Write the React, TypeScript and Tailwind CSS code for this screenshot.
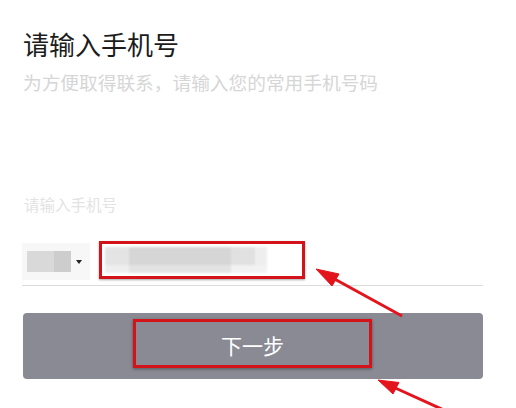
import React from "react";

export default function App() {
  return (
    <div
      className="relative w-[516px] h-[408px] bg-white overflow-hidden"
      style={{ fontFamily: '"Noto Sans CJK SC", "Noto Sans", sans-serif' }}
    >
      <div className="flex flex-col pl-[23px] pr-[33px]">
        <div className="mt-[31px] text-[26px] leading-[26px] text-[#1c1c1c]">请输入手机号</div>
        <div className="mt-[15px] text-[18.7px] leading-[19px] text-[#d6d6d6]">
          为方便取得联系，请输入您的常用手机号码
        </div>
        <div className="mt-[105px] ml-[1px] text-[15.5px] leading-[16px] text-[#e3e3e3]">请输入手机号</div>
        <div className="mt-[28px] flex h-[46px] items-start border-b border-[#dcdcdc] -ml-[1px]">
          <div className="mt-[3px] flex h-[37px] w-[68px] items-center bg-[#f7f7f7] pl-[5px]">
            <div className="flex h-[21px] blur-[0.6px]">
              <div className="w-[27px] bg-[#d9d9d9]" />
              <div className="w-[17px] bg-[#cdcdcd]" />
            </div>
            <div className="ml-[5px] h-0 w-0 border-x-[3px] border-t-[4px] border-x-transparent border-t-[#222]" />
          </div>
          <div className="ml-[9px] mt-[1px] flex h-[38px] w-[206px] items-center border-[3px] border-[#d3121a] pl-[3px] shadow-[0_1px_2px_rgba(0,0,0,0.35)]">
            <div className="flex h-[26px] w-[162px] flex-col blur-[1px]">
              <div className="flex h-[18px]">
                <div className="w-[24px] bg-[#e4e4e4]" />
                <div className="w-[102px] bg-[#d6d6d6]" />
                <div className="w-[24px] bg-[#e1e1e1]" />
                <div className="w-[12px] bg-[#eeeeee]" />
              </div>
              <div className="flex h-[8px]">
                <div className="w-[24px] bg-[#eeeeee]" />
                <div className="w-[102px] bg-[#e3e3e3]" />
                <div className="w-[36px] bg-[#f2f2f2]" />
              </div>
            </div>
          </div>
        </div>
        <div className="mt-[27px] flex h-[66px] w-[460px] items-start rounded-[4px] bg-[#8a8a94] pl-[110px] pt-[6px]">
          <div className="flex h-[49px] w-[239px] items-center justify-center border-[3px] border-[#d3121a] shadow-[0_1px_3px_rgba(0,0,0,0.4)]">
            <span className="mt-[3px] text-[21px] leading-[21px] text-white">下一步</span>
          </div>
        </div>
      </div>
      <svg className="absolute left-0 top-0" width="516" height="408" viewBox="0 0 516 408">
        <g fill="#e3141c" stroke="#e3141c">
          <line x1="402" y1="316" x2="330" y2="276.5" strokeWidth="3" />
          <polygon points="316,269 339,274 332,286" strokeWidth="1" />
          <line x1="446" y1="411" x2="392" y2="386.5" strokeWidth="3" />
          <polygon points="378,380 399,382.5 393,394" strokeWidth="1" />
        </g>
      </svg>
    </div>
  );
}
